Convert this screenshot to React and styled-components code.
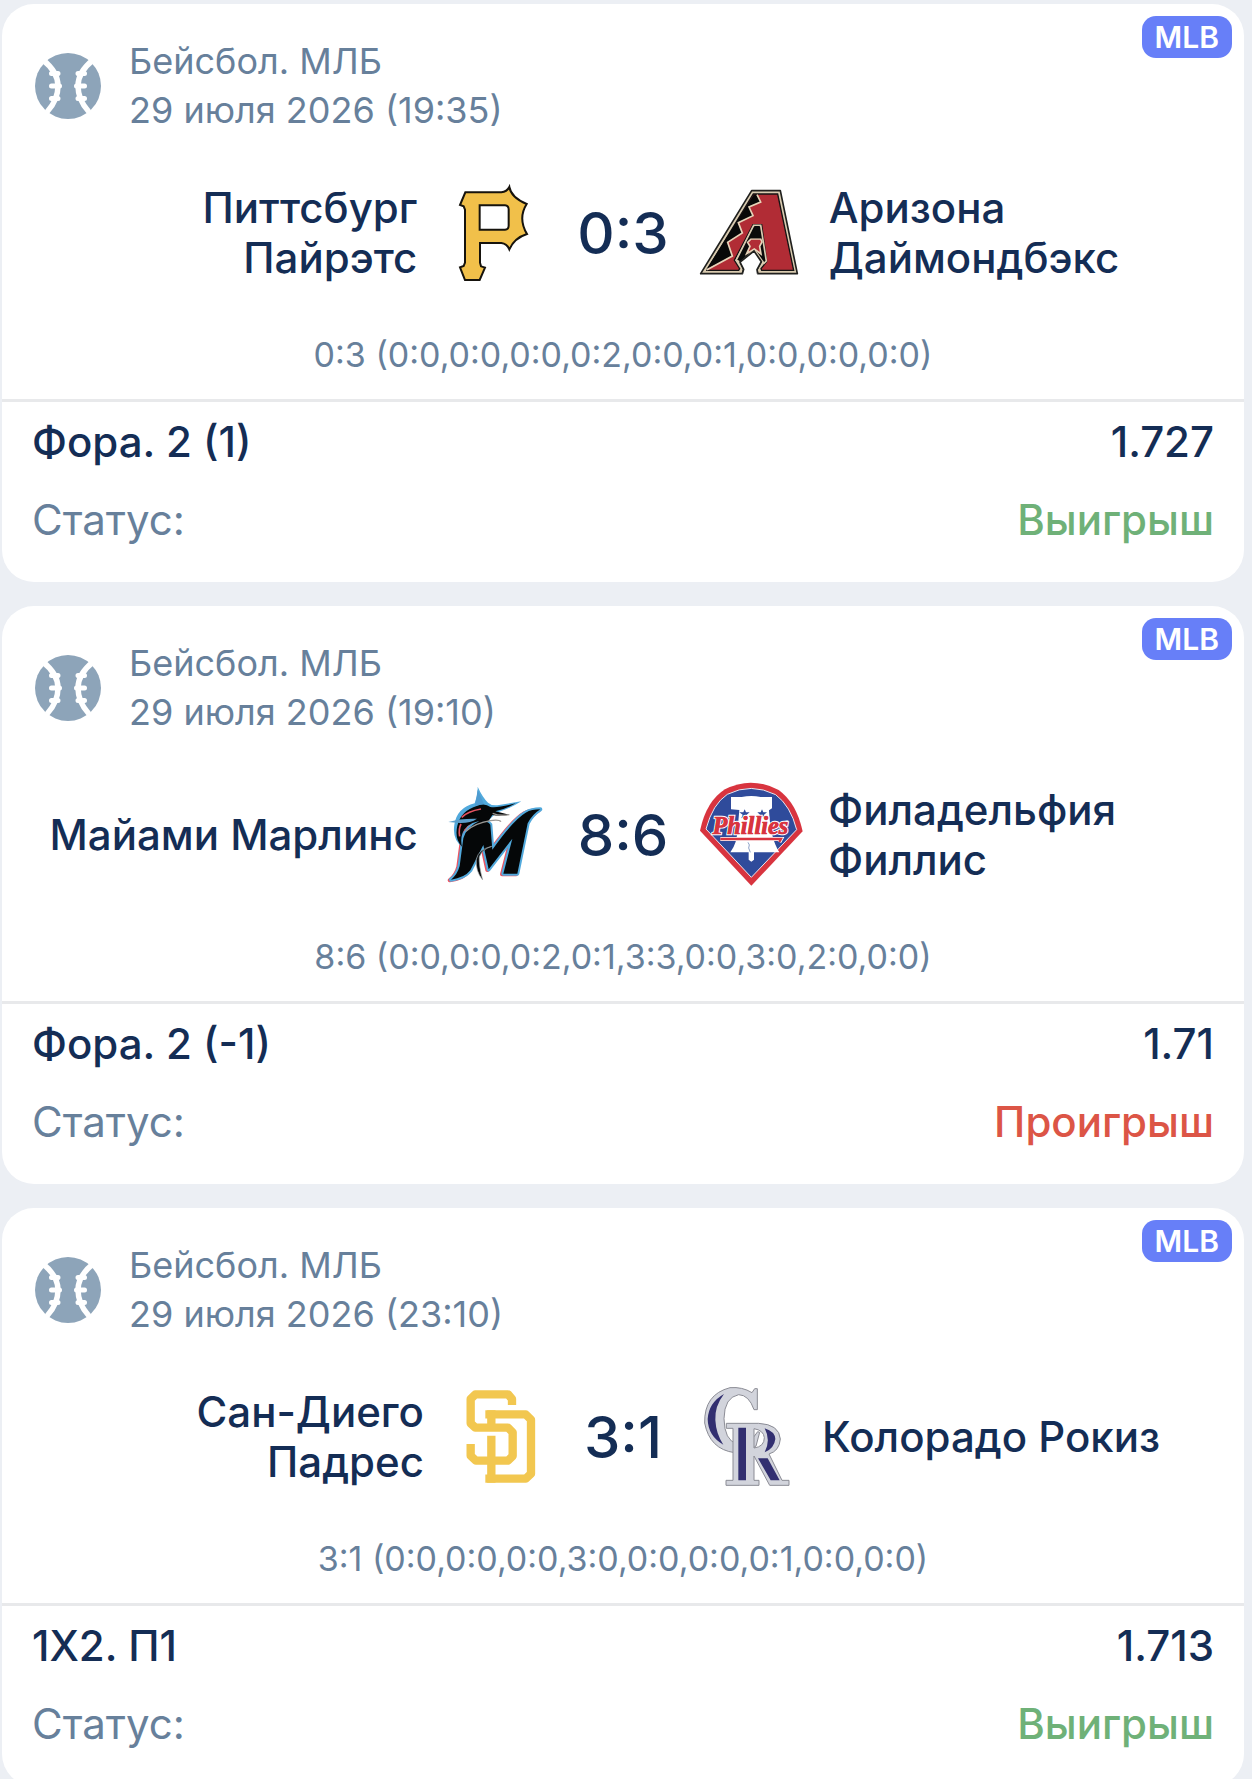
import React from 'react';
import styled, { createGlobalStyle } from 'styled-components';

const color = {
  page: '#eceff4',
  card: '#ffffff',
  ink: '#142d55',
  muted: '#67809b',
  icon: '#8da4b9',
  line: '#e8e9eb',
  badge: '#677ff8',
  win: '#6fb178',
  loss: '#dc5546',
};

const GlobalStyle = createGlobalStyle`
  *, *::before, *::after { box-sizing: border-box; }
  html { background: ${color.page}; }
  body {
    margin: 0;
    font-family: Inter, 'Noto Sans', sans-serif;
    color: ${color.ink};
  }
  h2, p, dl, dt, dd { margin: 0; font-weight: inherit; }
`;

const BetList = styled.main`
  display: flex;
  flex-direction: column;
  gap: 24px;
  padding: 4px 8px 0 2px;
`;

const Card = styled.article`
  position: relative;
  background: ${color.card};
  border-radius: 32px;
`;

const LeagueBadge = styled.span`
  position: absolute;
  top: 12px;
  right: 12px;
  padding: 0 13px;
  border-radius: 14px;
  background: ${color.badge};
  color: #fff;
  font-size: 30px;
  font-weight: 600;
  line-height: 42px;
`;

const Header = styled.header`
  display: flex;
  align-items: center;
  gap: 28px;
  padding: 33px 120px 0 33px;
`;

const SportIcon = styled.svg`
  flex: none;
  width: 66px;
  height: 66px;
`;

const HeaderText = styled.p`
  font-size: 36px;
  line-height: 49px;
  color: ${color.muted};
`;

const HeaderLine = styled.span`
  display: block;
`;

const Matchup = styled.section`
  display: flex;
  align-items: center;
  padding: 46px 44px 0;
`;

const Team = styled.div`
  flex: 1 1 0;
  min-width: 0;
  display: flex;
  flex-direction: ${(p) => (p.$side === 'home' ? 'row' : 'row-reverse')};
  align-items: center;
  justify-content: flex-end;
  gap: 24px;
  text-align: ${(p) => (p.$side === 'home' ? 'right' : 'left')};
`;

const TeamName = styled.h2`
  font-size: 42px;
  font-weight: 500;
  line-height: 50px;
`;

const Logo = styled.svg`
  flex: none;
  width: 104px;
  height: 104px;
  overflow: visible;
`;

const Score = styled.strong`
  flex: none;
  padding: 0 32px;
  font-size: 58px;
  font-weight: 500;
  line-height: 64px;
`;

const Innings = styled.p`
  padding: 50px 32px 24px;
  font-size: 34px;
  line-height: 40px;
  text-align: center;
  color: ${color.muted};
`;

const BetDetails = styled.dl`
  display: flex;
  flex-direction: column;
  gap: 30px;
  padding: 16px 30px 38px;
  border-top: 3px solid ${color.line};
`;

const BetRow = styled.div`
  display: flex;
  justify-content: space-between;
  font-size: 42px;
  line-height: 48px;
`;

const Pick = styled.dt`
  font-weight: 500;
`;

const Odds = styled.dd`
  font-weight: 500;
`;

const StatusLabel = styled.dt`
  color: ${color.muted};
`;

const StatusValue = styled.dd`
  font-weight: 500;
  color: ${(p) => (p.$won ? color.win : color.loss)};
`;

function Baseball() {
  return (
    <SportIcon viewBox="0 0 66 66" aria-hidden="true">
      <circle cx="33" cy="33" r="33" fill={color.icon} />
      <g fill="none" stroke="#fff" strokeWidth="5.5">
        <path d="M8 7Q23 19 23 33Q23 47 12 59" />
        <path d="M58 7Q43 19 43 33Q43 47 54 59" />
        <path strokeWidth="5" strokeLinecap="round" d="M16.500 20.500H23M16.500 33H24.500M16.500 45.500H23M49.500 20.500H43M49.500 33H41.500M49.500 45.500H43" />
      </g>
    </SportIcon>
  );
}

function PiratesLogo() {
  return (
    <Logo viewBox="9 33 312 312" role="img" aria-label="Питтсбург Пайрэтс">
      <path
        d="M82 67H190Q207 65 214 51Q219 82 266 102Q239 145 267 192Q229 204 214 238Q207 221 190 219H126V278L129 289L141 293L125 330H81L66 292L77 288L81 278V119L77 109L66 105ZM125 106V179H201Q212 178 212 167V118Q212 107 201 106Z"
        fill="#f1c04a"
        fillRule="evenodd"
        stroke="#16130d"
        strokeWidth="6"
      />
    </Logo>
  );
}

function DiamondbacksLogo() {
  return (
    <Logo viewBox="60 33 312 312" role="img" aria-label="Аризона Даймондбэкс">
      <path d="M212 62H298L349 311H230L228 299L241 275L219 243L177 276L188 298L184 311H59Z" fill="#d9cbb0" stroke="#20201e" strokeWidth="5" strokeLinejoin="round" />
      <path d="M217 72H290L338 301H242L240 296L257 275L242 164H216L160 271L176 296L173 301H78Z" fill="#b12c35" stroke="#151313" strokeWidth="4" />
      <path d="M218 74L76 298L154 258L140 217L184 189L172 158L216 137L204 111L239 96L228 73Z" fill="#080808" />
      <path d="M78 299L154 258L140 217L184 189L172 158L216 137L204 111L239 96L228 74" fill="none" stroke="#e7d3b8" strokeWidth="5" />
      <path d="M218 166H239L256 273L249 280L220 239L179 278L166 270Z" fill="#0b0b0b" stroke="#d9cbb0" strokeWidth="5" />
      <path d="M210 207H239L243 216L236 229L240 252L220 237L197 251L207 229L200 217Z" fill="#b12c35" stroke="#e7d3b8" strokeWidth="5" />
      <path d="M222 168L207 205H240L235 168Z" fill="#0b0b0b" />
      <path d="M220 243L179 278L188 298L184 311H230L228 299L241 275Z" fill="#fff" />
      <path d="M184 311L188 298L177 276L219 243L241 275L228 299L230 311" fill="none" stroke="#20201e" strokeWidth="5" />
    </Logo>
  );
}

function MarlinsLogo() {
  const letter =
    'M103 205Q112 171 151 153Q176 151 184 164L190 239Q253 150 290 128Q308 118 334 118Q309 134 296 160L265 311H223L250 206L179 298L163 225L124 301Q106 324 66 329Q85 314 92 288Z';
  return (
    <Logo viewBox="39 39 312 312" role="img" aria-label="Майами Марлинс">
      <path d={letter} fill="#ee5260" stroke="#ee5260" strokeWidth="12" strokeLinejoin="round" transform="translate(-4 2)" />
      <path d={letter} fill="#51a9dc" stroke="#51a9dc" strokeWidth="12" strokeLinejoin="round" />
      <path d="M137 100Q147 77 146 50Q160 81 177 98Q189 109 210 105L277 94Q245 115 202 128L180 150L119 157Q96 178 101 232Q69 208 76 164Q84 113 137 100Z" fill="#51a9dc" />
      <path d={letter} fill="#050708" />
      <path d="M145 107Q168 98 184 111Q205 115 260 100Q226 119 199 124L241 134Q210 140 190 135L178 154Q130 148 107 178Q92 199 99 230Q76 207 85 167Q95 122 145 107Z" fill="#050708" />
      <path d="M146 60L165 102L138 107Z" fill="#4e9bd0" />
      <path d="M58 156Q91 145 144 146Q124 160 92 159Z" fill="#5b9fcc" />
      <path d="M98 142Q116 124 156 117M92 199Q88 177 96 162" fill="none" stroke="#e55361" strokeWidth="5" />
      <path d="M111 184Q136 160 184 152Q210 148 216 155M191 130Q212 139 241 134" fill="none" stroke="#9b9894" strokeWidth="4" />
      <path d="M188 229Q158 239 151 260Q149 285 161 330Q139 304 142 268Q148 238 188 229Z" fill="#050708" stroke="#aab0b2" strokeWidth="2" />
    </Logo>
  );
}

function PhilliesLogo() {
  return (
    <Logo viewBox="30 39 312 312" role="img" aria-label="Филадельфия Филлис">
      <path d="M30 182Q49 93 105 58Q183 17 266 60Q319 98 338 184L184 347Z" fill="#d8343f" />
      <path d="M48 177Q68 102 112 73Q183 37 257 74Q302 108 320 179L184 322Z" fill="#2f4b9b" stroke="#e9e6ef" strokeWidth="3" />
      <path d="M123 81H155Q184 75 212 81H246V115L237 121Q241 206 268 247H192V269L184 275L176 269V247H121Q142 218 143 176L148 120L123 118Z" fill="#fff" />
      <path d="M174 217Q181 224 176 234L181 247" fill="none" stroke="#5270aa" strokeWidth="2" />
      <path d="M148 127H160L164 118L168 127H179L170 134L174 145L164 139L154 145L158 134ZM202 127H212L216 118L220 127H231L222 134L226 145L216 139L206 145L210 134Z" fill="#2f4b9b" />
      <text x="181" y="193" textAnchor="middle" fontFamily="'Liberation Serif', serif" fontStyle="italic" fontWeight="700" fontSize="73" fill="#d8343f" stroke="#fff" strokeWidth="8" paintOrder="stroke">Phillies</text>
      <text x="181" y="193" textAnchor="middle" fontFamily="'Liberation Serif', serif" fontStyle="italic" fontWeight="700" fontSize="73" fill="#d8343f" stroke="#d8343f" strokeWidth="2" aria-hidden="true">Phillies</text>
      <path d="M91 207H273L268 216" fill="none" stroke="#fff" strokeWidth="12" />
      <path d="M91 207H273L268 216" fill="none" stroke="#d8343f" strokeWidth="7" />
      <text x="286" y="163" fontFamily="Inter, sans-serif" fontSize="15" fill="#fff">™</text>
    </Logo>
  );
}

function PadresLogo() {
  return (
    <Logo viewBox="24 45 312 312" role="img" aria-label="Сан-Диего Падрес">
      <g fill="none" stroke="#f2c750" strokeWidth="25" strokeLinejoin="round">
        <path d="M216 105V87L204 73H106L92 87V160L106 173H204L218 187V258L204 272H108L92 257V222" />
        <path d="M136 133H257L273 149V311L257 326H136" />
        <path d="M154 121V173M154 197V338" />
      </g>
    </Logo>
  );
}

function RockiesLogo() {
  return (
    <Logo viewBox="42 45 312 312" role="img" aria-label="Колорадо Рокиз">
      <g fill="#d2d4dc" stroke="#8b8c95" strokeWidth="3" strokeLinejoin="round">
        <path d="M232 56V119H222Q207 75 176 74Q133 82 132 146Q133 211 171 222Q213 220 233 185L239 187L228 228Q203 248 164 248Q89 238 74 159Q72 73 150 53Q187 50 216 68L224 56Z" />
        <path d="M139 160H236Q298 163 301 207Q298 243 267 252L306 331H327V346H269L222 258V331H237V346H138V331H159V175H139ZM222 176V234Q253 230 253 203Q251 181 222 176Z" fillRule="evenodd" />
      </g>
      <g fill="#322f70">
        <path d="M132 72Q104 108 106 150Q108 191 130 224Q84 198 83 147Q86 98 132 72Z" />
        <path d="M175 173H198V331H175ZM254 175Q285 185 286 207Q283 235 254 247Q273 211 254 175ZM234 265H263L299 331H272Z" />
      </g>
    </Logo>
  );
}

const bets = [
  {
    id: 1,
    date: '29 июля 2026 (19:35)',
    home: { name: 'Питтсбург Пайрэтс', Emblem: PiratesLogo },
    away: { name: 'Аризона Даймондбэкс', Emblem: DiamondbacksLogo },
    score: '0:3',
    innings: '0:0,0:0,0:0,0:2,0:0,0:1,0:0,0:0,0:0',
    pick: 'Фора. 2 (1)',
    odds: '1.727',
    won: true,
  },
  {
    id: 2,
    date: '29 июля 2026 (19:10)',
    home: { name: 'Майами Марлинс', Emblem: MarlinsLogo },
    away: { name: 'Филадельфия Филлис', Emblem: PhilliesLogo },
    score: '8:6',
    innings: '0:0,0:0,0:2,0:1,3:3,0:0,3:0,2:0,0:0',
    pick: 'Фора. 2 (-1)',
    odds: '1.71',
    won: false,
  },
  {
    id: 3,
    date: '29 июля 2026 (23:10)',
    home: { name: 'Сан-Диего Падрес', Emblem: PadresLogo },
    away: { name: 'Колорадо Рокиз', Emblem: RockiesLogo },
    score: '3:1',
    innings: '0:0,0:0,0:0,3:0,0:0,0:0,0:1,0:0,0:0',
    pick: '1X2. П1',
    odds: '1.713',
    won: true,
  },
];

function BetCard({ bet }) {
  const { home, away } = bet;
  return (
    <Card>
      <LeagueBadge>MLB</LeagueBadge>
      <Header>
        <Baseball />
        <HeaderText>
          <HeaderLine>Бейсбол. МЛБ</HeaderLine>
          <HeaderLine>{bet.date}</HeaderLine>
        </HeaderText>
      </Header>
      <Matchup>
        <Team $side="home">
          <TeamName>{home.name}</TeamName>
          <home.Emblem />
        </Team>
        <Score>{bet.score}</Score>
        <Team $side="away">
          <TeamName>{away.name}</TeamName>
          <away.Emblem />
        </Team>
      </Matchup>
      <Innings>{`${bet.score} (${bet.innings})`}</Innings>
      <BetDetails>
        <BetRow>
          <Pick>{bet.pick}</Pick>
          <Odds>{bet.odds}</Odds>
        </BetRow>
        <BetRow>
          <StatusLabel>Статус:</StatusLabel>
          <StatusValue $won={bet.won}>{bet.won ? 'Выигрыш' : 'Проигрыш'}</StatusValue>
        </BetRow>
      </BetDetails>
    </Card>
  );
}

export default function App() {
  return (
    <>
      <GlobalStyle />
      <BetList>
        {bets.map((bet) => (
          <BetCard key={bet.id} bet={bet} />
        ))}
      </BetList>
    </>
  );
}
